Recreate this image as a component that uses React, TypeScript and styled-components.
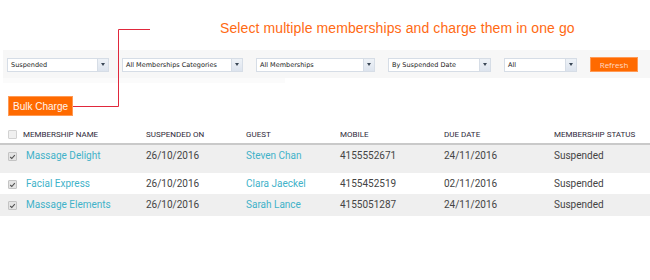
import styled, { createGlobalStyle } from "styled-components";

const GlobalStyle = createGlobalStyle`
  body {
    margin: 0;
    background: #fff;
    font-family: Roboto, "Liberation Sans", sans-serif;
  }
`;

const Page = styled.div`
  position: relative;
  width: 650px;
  height: 280px;
  overflow: hidden;
`;

const Callout = styled.div`
  height: 50px;
  box-sizing: border-box;
  padding: 20px 0 0 220px;
  font-family: "Liberation Sans", sans-serif;
  font-size: 14px;
  letter-spacing: 0.1px;
  color: #ff6a13;
  white-space: nowrap;
`;

const Connector = styled.svg`
  position: absolute;
  left: 0;
  top: 0;
  pointer-events: none;
`;

const FilterBar = styled.div`
  display: flex;
  align-items: center;
  gap: 13px;
  height: 28px;
  margin-left: 3px;
  padding-left: 4px;
  background: #f7f7f7;
`;

const Underline = styled.div`
  width: 282px;
  height: 5px;
  margin-left: 3px;
  background: #fbfbfb;
`;

const Select = styled.div<{ $w: number }>`
  display: flex;
  width: ${(p) => p.$w}px;
  height: 14px;
  box-sizing: border-box;
  border: 1px solid #d6dde6;
  background: #fff;
  margin-top: 1px;
`;

const SelectText = styled.span`
  flex: 1;
  padding-left: 3px;
  font-family: "DejaVu Sans", sans-serif;
  font-size: 6.5px;
  line-height: 12px;
  color: #1a1a1a;
  white-space: nowrap;
  overflow: hidden;
`;

const SelectArrow = styled.span`
  width: 10px;
  display: flex;
  align-items: center;
  justify-content: center;
  border-left: 1px solid #d6dde6;
  background: linear-gradient(#eef2f7, #dde4ee);
  &::after {
    content: "";
    border-left: 2.5px solid transparent;
    border-right: 2.5px solid transparent;
    border-top: 3px solid #3a4756;
  }
`;

const Button = styled.button<{ $size: number; $w: number; $h: number }>`
  display: block;
  width: ${(p) => p.$w}px;
  height: ${(p) => p.$h}px;
  padding: 0;
  border: 1px solid #ff9a55;
  background: #ff6a00;
  color: #fff5ee;
  font-family: "Liberation Sans", sans-serif;
  font-size: ${(p) => p.$size}px;
  cursor: pointer;
`;

const Refresh = styled(Button)`
  font-family: "Open Sans", "Liberation Sans", sans-serif;
  color: #ffd9c4;
`;

const BulkRow = styled.div`
  display: flex;
  padding: 13px 0 0 8px;
`;

const Table = styled.div`
  margin-top: 12px;
`;

const Row = styled.div<{ $shade?: boolean; $extra?: number }>`
  display: grid;
  grid-template-columns: 26px 120px 100px 94px 104px 110px 1fr;
  align-items: start;
  padding: 5px 0 ${(p) => 4 + (p.$extra || 0)}px;
  background: ${(p) => (p.$shade ? "#efefef" : "#fff")};
  font-size: 10px;
  line-height: 12px;
  color: #444;
`;

const HeadRow = styled(Row)`
  padding: 2px 0 3px;
  border-bottom: 2px solid #c9c9c9;
  font-size: 8px;
  line-height: 10px;
  color: #2e2838;
  text-transform: uppercase;
`;

const Cell = styled.div<{ $link?: boolean; $shift?: number }>`
  white-space: nowrap;
  color: ${(p) => (p.$link ? "#3fb2c9" : "inherit")};
  margin-left: ${(p) => p.$shift || 0}px;
`;

const Check = styled.span<{ $on?: boolean }>`
  display: flex;
  align-items: center;
  justify-content: center;
  width: 9px;
  height: 9px;
  margin: ${(p) => (p.$on ? "2px" : "0")} 0 0 8px;
  box-sizing: border-box;
  border: 1px solid ${(p) => (p.$on ? "#c4c4c4" : "#d2d2d2")};
  border-radius: 1px;
  background: ${(p) => (p.$on ? "#e4e4e4" : "#f0f0f0")};
`;

const filters = [
  { label: "Suspended", w: 102 },
  { label: "All Memberships Categories", w: 121 },
  { label: "All Memberships", w: 119 },
  { label: "By Suspended Date", w: 103 },
  { label: "All", w: 73 },
];

const rows = [
  { name: "Massage Delight", on: "26/10/2016", guest: "Steven Chan", mobile: "4155552671", due: "24/11/2016", extra: 7 },
  { name: "Facial Express", on: "26/10/2016", guest: "Clara Jaeckel", mobile: "4155452519", due: "02/11/2016", extra: 0 },
  { name: "Massage Elements", on: "26/10/2016", guest: "Sarah Lance", mobile: "4155051287", due: "24/11/2016", extra: 1 },
];

function Tick() {
  return (
    <svg width="7" height="6" viewBox="0 0 7 6">
      <path d="M1.2 3 L2.8 4.5 L5.8 1.2" fill="none" stroke="#505050" strokeWidth="1.1" />
    </svg>
  );
}

function App() {
  return (
    <Page>
      <GlobalStyle />
      <Callout>Select multiple memberships and charge them in one go</Callout>
      <FilterBar>
        {filters.map((f) => (
          <Select key={f.label} $w={f.w}>
            <SelectText>{f.label}</SelectText>
            <SelectArrow />
          </Select>
        ))}
        <Refresh $size={8} $w={48} $h={15}>
          Refresh
        </Refresh>
      </FilterBar>
      <Underline />
      <BulkRow>
        <Button $size={10} $w={65} $h={20}>
          Bulk Charge
        </Button>
      </BulkRow>
      <Table>
        <HeadRow>
          <Check />
          <Cell $shift={-3}>Membership Name</Cell>
          <Cell>Suspended On</Cell>
          <Cell>Guest</Cell>
          <Cell>Mobile</Cell>
          <Cell>Due Date</Cell>
          <Cell>Membership Status</Cell>
        </HeadRow>
        {rows.map((r, i) => (
          <Row key={r.name} $shade={i % 2 === 0} $extra={r.extra}>
            <Check $on>
              <Tick />
            </Check>
            <Cell $link>{r.name}</Cell>
            <Cell>{r.on}</Cell>
            <Cell $link>{r.guest}</Cell>
            <Cell>{r.mobile}</Cell>
            <Cell>{r.due}</Cell>
            <Cell>Suspended</Cell>
          </Row>
        ))}
      </Table>
      <Connector width="650" height="280">
        <defs>
          <linearGradient id="fadeR" x1="0" x2="1" y1="0" y2="0">
            <stop offset="0" stopColor="#e0283c" />
            <stop offset="1" stopColor="#f4a0a8" />
          </linearGradient>
        </defs>
        <polyline points="73,106.5 118.5,106.5 118.5,29.5 150,29.5" fill="none" stroke="#e0283c" strokeWidth="1" />
        <line x1="150" y1="29.5" x2="216" y2="29.5" stroke="url(#fadeR)" strokeWidth="1" />
      </Connector>
    </Page>
  );
}

export default App;
